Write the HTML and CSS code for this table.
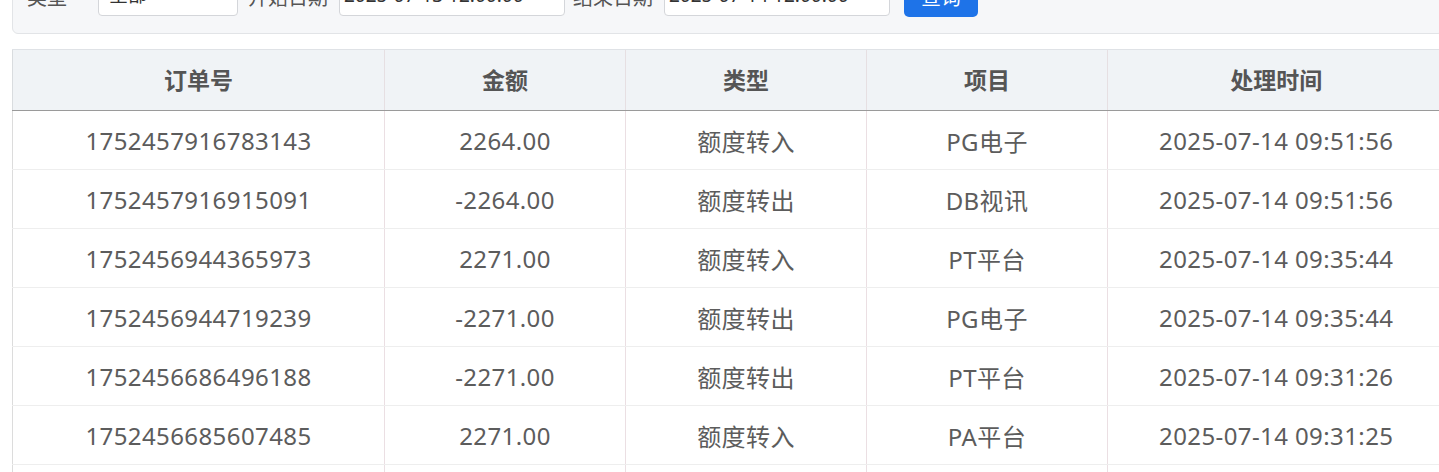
FILE: index.html
```html
<!DOCTYPE html>
<html lang="zh-CN">
<head>
<meta charset="utf-8">
<title>额度转换记录</title>
<link rel="stylesheet" href="styles.css">
</head>
<body>
<div class="page">
  <div class="filter">
    <label class="lbl">类型</label>
    <div class="field sel">全部</div>
    <label class="lbl">开始日期</label>
    <div class="field date">2025-07-13 12:00:00</div>
    <label class="lbl lbl-end">结束日期</label>
    <div class="field date">2025-07-14 12:00:00</div>
    <button class="btn">查询</button>
  </div>
  <table class="grid">
    <colgroup>
      <col class="c1"><col class="c2"><col class="c3"><col class="c4"><col class="c5">
    </colgroup>
    <thead>
      <tr><th>订单号</th><th>金额</th><th>类型</th><th>项目</th><th>处理时间</th></tr>
    </thead>
    <tbody>
      <tr><td>1752457916783143</td><td>2264.00</td><td>额度转入</td><td>PG电子</td><td>2025-07-14 09:51:56</td></tr>
      <tr><td>1752457916915091</td><td>-2264.00</td><td>额度转出</td><td>DB视讯</td><td>2025-07-14 09:51:56</td></tr>
      <tr><td>1752456944365973</td><td>2271.00</td><td>额度转入</td><td>PT平台</td><td>2025-07-14 09:35:44</td></tr>
      <tr><td>1752456944719239</td><td>-2271.00</td><td>额度转出</td><td>PG电子</td><td>2025-07-14 09:35:44</td></tr>
      <tr><td>1752456686496188</td><td>-2271.00</td><td>额度转出</td><td>PT平台</td><td>2025-07-14 09:31:26</td></tr>
      <tr><td>1752456685607485</td><td>2271.00</td><td>额度转入</td><td>PA平台</td><td>2025-07-14 09:31:25</td></tr>
      <tr><td>1752456685512204</td><td>-2271.00</td><td>额度转出</td><td>DB视讯</td><td>2025-07-14 09:31:25</td></tr>
    </tbody>
  </table>
</div>
</body>
</html>
```
FILE: styles.css
```css
html, body {
  margin: 0;
  padding: 0;
  overflow: hidden;
  background: #ffffff;
}
body {
  font-family: "Noto Sans", "Noto Sans CJK SC", sans-serif;
  color: #5c5c5c;
}
.page {
  width: 1432px;
  padding: 0 0 0 12px;
  margin-top: -42px;
}
.filter {
  display: flex;
  align-items: center;
  padding: 16px 14px;
  background: #f6f7f9;
  border: 1px solid #e2e4e7;
  border-radius: 6px;
  font-size: 20px;
}
.lbl {
  color: #555;
  white-space: nowrap;
  margin-right: 11px;
  flex-shrink: 0;
}
.lbl-end { margin-left: -2px; }
.field {
  box-sizing: border-box;
  flex-shrink: 0;
  height: 40px;
  line-height: 36px;
  padding: 0 6px;
  background: #fff;
  border: 1px solid #d4d6da;
  border-radius: 4px;
  color: #333;
  font-size: 19px;
  white-space: nowrap;
  overflow: hidden;
  margin-right: 10px;
}
.sel { width: 140px; margin-left: 20px; padding-left: 10px; }
.date { width: 226px; padding-left: 4px; }
.btn {
  flex-shrink: 0;
  height: 41px;
  width: 74px;
  margin-left: 4px;
  margin-top: 1px;
  border: none;
  border-radius: 5px;
  background: #1e73e8;
  color: #fff;
  font: inherit;
  font-size: 20px;
}
.grid {
  margin-top: 15px;
  width: 1432px;
  border-collapse: collapse;
  table-layout: fixed;
  font-size: 24px;
}
.c1 { width: 372px; }
.c2 { width: 241px; }
.c3 { width: 241px; }
.c4 { width: 241px; }
.c5 { width: 337px; }
.grid th {
  height: 57px;
  padding: 0 0 3px;
  background: #f0f3f6;
  color: #555;
  font-weight: 700;
  font-size: 23px;
  border-top: 1px solid #dfe2e6;
  border-left: 1px solid #e6dfe2;
  border-bottom: 1px solid #9a9a9a;
}
.grid th:first-child { border-left-color: #d9dcdf; }
.grid td {
  height: 58px;
  padding: 0;
  text-align: center;
  letter-spacing: 0.4px;
  border-left: 1px solid #ebdfe3;
  border-bottom: 1px solid #eeeeee;
}
.grid td:first-child { border-left-color: #dcdcdc; }
```
